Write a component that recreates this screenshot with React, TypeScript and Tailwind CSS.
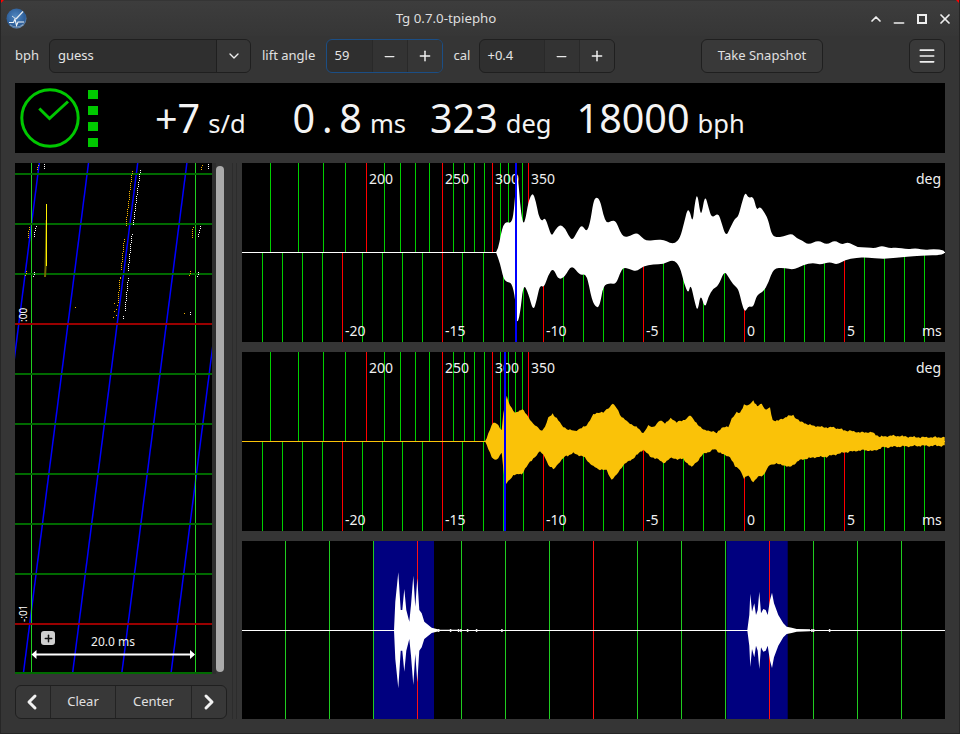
import { Menu, Minus, Plus, ChevronDown, ChevronLeft, ChevronRight, ChevronUp, X } from "lucide-react";

type Pt = [number, number];

const FONT = "font-['Noto_Sans',sans-serif]";

// outlines read off the 3x crops: [x in crop, y in crop]
const WAVE_1_TOP: Pt[] = [
  [768, 277], [775, 265], [782, 225], [790, 195], [800, 185], [812, 190], [820, 170], [826, 100], [830, 50], [835, 60], [840, 130],
  [848, 190], [855, 185], [865, 125], [878, 95], [888, 125], [895, 165], [905, 185], [915, 172], [925, 200], [935, 230], [945, 210],
  [960, 193], [975, 205], [985, 225], [997, 242], [1010, 218], [1025, 193], [1040, 217], [1050, 190], [1060, 125], [1068, 110], [1080, 120],
];
const WAVE_1_TOP_R: Pt[] = [
  [10, 165], [20, 190], [35, 182], [48, 183], [60, 215], [72, 232], [90, 228], [110, 217], [125, 232], [140, 243], [165, 240], [190, 238],
  [210, 250], [225, 250], [240, 235], [252, 190], [262, 148], [270, 155], [278, 190], [285, 125], [292, 100], [300, 155], [305, 162],
  [315, 105], [325, 140], [335, 175], [355, 158], [365, 190], [378, 230], [390, 205], [405, 175], [415, 170], [425, 130], [436, 95],
  [445, 115], [460, 108], [470, 152], [480, 138], [495, 160], [505, 180], [515, 225], [530, 232], [550, 230], [575, 220], [590, 235],
  [605, 240], [625, 255], [655, 240], [680, 255], [705, 240], [725, 255], [745, 245], [770, 262], [800, 262], [825, 265], [845, 257],
  [870, 265], [890, 262], [920, 268], [950, 265], [975, 270], [1000, 267], [1034, 270],
];
const WAVE_1_BOTTOM: Pt[] = [
  [768, 277], [780, 310], [790, 355], [800, 367], [815, 368], [826, 415], [830, 495], [840, 465], [850, 370], [865, 400], [880, 455],
  [890, 420], [900, 375], [912, 383], [925, 345], [940, 323], [955, 360], [975, 350], [995, 313], [1020, 347], [1040, 340], [1055, 420],
  [1070, 445], [1080, 435],
];
const WAVE_1_BOTTOM_R: Pt[] = [
  [10, 375], [30, 370], [48, 373], [60, 340], [70, 322], [90, 328], [110, 335], [130, 318], [160, 313], [190, 313], [220, 298], [240, 320],
  [252, 370], [265, 403], [272, 370], [285, 430], [293, 455], [302, 400], [315, 447], [325, 410], [340, 385], [355, 378], [373, 333],
  [385, 350], [400, 375], [415, 385], [425, 430], [435, 458], [445, 437], [460, 443], [470, 405], [490, 395], [505, 370], [520, 325],
  [553, 323], [580, 330], [610, 315], [640, 308], [660, 315], [690, 305], [710, 315], [735, 300], [770, 293], [800, 292], [850, 297],
  [890, 293], [920, 290], [960, 287], [1034, 285],
];

const WAVE_2_TOP: Pt[] = [
  [735, 274], [745, 250], [755, 225], [765, 218], [775, 225], [785, 240], [790, 190], [800, 140], [810, 165], [825, 190], [835, 185],
  [847, 176], [860, 195], [875, 215], [890, 230], [903, 243], [915, 230], [925, 205], [938, 190], [950, 205], [965, 225], [985, 240],
  [1005, 242], [1025, 235], [1040, 225], [1050, 210], [1060, 195], [1080, 185],
];
const WAVE_2_TOP_R: Pt[] = [
  [10, 188], [20, 180], [38, 160], [50, 175], [65, 200], [85, 218], [105, 228], [130, 249], [145, 228], [160, 230], [180, 212], [195, 218],
  [212, 206], [230, 215], [250, 213], [270, 195], [285, 215], [310, 240], [330, 242], [350, 250], [365, 232], [385, 232], [395, 205],
  [410, 188], [420, 190], [432, 163], [445, 168], [460, 151], [472, 170], [485, 160], [495, 178], [510, 175], [518, 210], [535, 212],
  [560, 200], [580, 196], [600, 215], [630, 225], [670, 232], [700, 232], [730, 240], [780, 247], [815, 247], [840, 260], [880, 257],
  [920, 260], [970, 262], [1034, 262],
];
const WAVE_2_BOTTOM: Pt[] = [
  [735, 274], [745, 295], [755, 320], [765, 332], [775, 325], [785, 305], [795, 405], [805, 395], [820, 375], [845, 372], [860, 350],
  [880, 325], [900, 305], [915, 320], [925, 345], [940, 359], [955, 340], [975, 320], [1000, 310], [1030, 320], [1060, 350], [1080, 358],
];
const WAVE_2_BOTTOM_R: Pt[] = [
  [20, 362], [35, 389], [50, 375], [70, 345], [100, 325], [130, 298], [150, 320], [170, 325], [190, 340], [210, 325], [250, 328], [275, 352],
  [295, 330], [310, 312], [345, 298], [370, 315], [390, 320], [405, 350], [420, 358], [432, 387], [445, 375], [460, 397], [475, 380],
  [490, 375], [510, 345], [525, 340], [550, 345], [570, 352], [600, 330], [640, 322], [680, 320], [730, 308], [790, 300], [820, 303],
  [850, 292], [900, 290], [970, 287], [1034, 287],
];

const BEAT_A: Pt[] = [
  [462, 286], [466, 200], [475, 112], [482, 225], [487, 225], [493, 162], [499, 225], [508, 260], [513, 210], [520, 122], [526, 215],
  [532, 130], [538, 225], [545, 235], [553, 260], [565, 270], [575, 278], [590, 282], [600, 284], [655, 284],
];
const BEAT_B: Pt[] = [
  [442, 286], [448, 240], [451, 176], [456, 230], [463, 205], [468, 240], [473, 225], [478, 170], [483, 235], [490, 222], [497, 225],
  [503, 240], [510, 195], [516, 173], [522, 205], [535, 240], [550, 265], [560, 275], [575, 278], [590, 282], [630, 283],
];

// absolute x of the grid in the two trace panels
const DEG_GREEN = [270, 298, 323, 345, 384, 400, 415, 429, 453, 464, 474, 484, 500, 508, 515, 522];
const DEG_RED = [366, 442, 492, 528];
const MS_GREEN = [262, 282, 302, 322, 362, 382, 402, 422, 462, 483, 503, 523, 563, 583, 603, 623, 663, 683, 703, 724, 764, 784, 804, 824, 864, 884, 904, 924];
const MS_RED = [342, 442, 543, 643, 744, 844];
const MS_LABELS: Array<[string, number]> = [["-20", 345], ["-15", 445], ["-10", 546], ["-5", 646], ["0", 747], ["5", 847]];
const DEG_LABELS: Array<[string, number]> = [["200", 369], ["250", 445], ["300", 495], ["350", 531]];

function dotRun(x1: number, y1: number, x2: number, y2: number): Pt[] {
  const count = Math.round((y2 - y1) / 2);
  return Array.from({ length: count + 1 }, (_v, i) => {
    const t = count === 0 ? 0 : i / count;
    return [Math.floor(x1 + (x2 - x1) * t), Math.floor(y1 + (y2 - y1) * t)] as Pt;
  });
}

const STRIP_WHITE: Pt[] = [
  ...dotRun(140.3, 170, 133.3, 224),
  ...dotRun(132, 234, 128.3, 270),
  ...dotRun(128.3, 278, 125, 310),
  ...dotRun(36, 226, 34, 236),
  ...dotRun(200.7, 226, 198.3, 236),
  [123, 316], [123, 318], [44, 164], [44, 166], [44, 168], [208, 164], [208, 166], [208, 168],
  [34, 272], [34, 274], [33, 276], [198, 272], [198, 274], [197, 276], [190, 312], [190, 314],
];
const STRIP_ORANGE: Pt[] = [
  ...dotRun(132.3, 171, 126, 225),
  ...dotRun(124.3, 239, 121.3, 269),
  ...dotRun(120.3, 277, 118, 302),
  ...dotRun(29.3, 227, 28.3, 237),
  ...dotRun(193, 227, 192.3, 237),
  [114, 303], [117, 305], [116, 309], [114, 311], [116, 315], [113, 317], [75, 307], [184, 313],
  [38, 165], [37, 167], [37, 169], [202, 165], [201, 167], [201, 169],
  [26, 271], [26, 273], [25, 275], [190, 271], [190, 273], [189, 275],
];

function toPoints(points: Pt[], x0: number, y0: number) {
  return points.map(([x, y]) => `${(x0 + x / 3).toFixed(1)},${(y0 + y / 3).toFixed(1)}`).join(" ");
}

function mirror(points: Pt[], center: number): Pt[] {
  return points.slice().reverse().map(([x, y]) => [x, 2 * center - y] as Pt);
}

// rounds the corners of the outline, the first trace has no sharp joints
function smoothPath(points: Pt[]) {
  const mid = (a: Pt, b: Pt) => `${((a[0] + b[0]) / 2).toFixed(1)} ${((a[1] + b[1]) / 2).toFixed(1)}`;
  let d = `M ${points[0][0].toFixed(1)} ${points[0][1].toFixed(1)}`;
  for (let i = 1; i < points.length - 1; i++) {
    d += ` Q ${points[i][0].toFixed(1)} ${points[i][1].toFixed(1)} ${mid(points[i], points[i + 1])}`;
  }
  const last = points[points.length - 1];
  return `${d} L ${last[0].toFixed(1)} ${last[1].toFixed(1)} Z`;
}

// the second trace has a rough edge: walk the outline and wobble it a little
function roughPath(points: Pt[]) {
  const out: Pt[] = [];
  for (let i = 0; i < points.length - 1; i++) {
    const [ax, ay] = points[i];
    const [bx, by] = points[i + 1];
    const steps = Math.max(1, Math.round(Math.abs(bx - ax) / 1.5));
    for (let s = 0; s < steps; s++) {
      const t = s / steps;
      const wobble = Math.round(Math.sin(out.length * 2.3) + Math.sin(out.length * 0.9));
      out.push([ax + (bx - ax) * t, ay + (by - ay) * t + wobble * 0.5]);
    }
  }
  out.push(points[points.length - 1]);
  return `M ${out.map(([x, y]) => `${x.toFixed(1)} ${y.toFixed(1)}`).join(" L ")} Z`;
}

function TraceShape({ cropY, fill, rough, top, topR, bottom, bottomR }: {
  cropY: number; fill: string; rough?: boolean; top: Pt[]; topR: Pt[]; bottom: Pt[]; bottomR: Pt[];
}) {
  // crops start at x=240 and x=600, panels at x=242
  const shift = (pts: Pt[], cropX: number) => pts.map(([x, y]) => [cropX - 242 + x / 3, cropY + y / 3] as Pt);
  const outline = [
    ...shift(top, 240),
    ...shift(topR, 600),
    ...shift(bottomR.slice().reverse(), 600),
    ...shift(bottom.slice().reverse(), 240),
  ];
  return <path d={rough ? roughPath(outline) : smoothPath(outline)} fill={fill} />;
}

function TracePanel({ centerY, blueX, wave, color }: { centerY: number; blueX: number; wave: React.ReactNode; color: string }) {
  const h = 179;
  return (
    <div className="h-[179px] w-[703px] bg-black">
      <svg width={703} height={h} viewBox={`0 0 703 ${h}`} className="block">
        {DEG_GREEN.map((x) => <line key={x} x1={x - 241.5} x2={x - 241.5} y1={0} y2={centerY} stroke="#00cf00" />)}
        {DEG_RED.map((x) => <line key={x} x1={x - 241.5} x2={x - 241.5} y1={0} y2={centerY} stroke="#ff0000" />)}
        {MS_GREEN.map((x) => <line key={x} x1={x - 241.5} x2={x - 241.5} y1={centerY} y2={h} stroke="#00cf00" />)}
        {MS_RED.map((x) => <line key={x} x1={x - 241.5} x2={x - 241.5} y1={centerY} y2={h} stroke="#ff0000" />)}
        <g fill="#f0f0f0" fontFamily="'Noto Sans',sans-serif" fontSize="14">
          {DEG_LABELS.map(([t, x]) => <text key={t} x={x - 242} y={21}>{t}</text>)}
          <text x={674} y={21}>deg</text>
          {MS_LABELS.map(([t, x]) => <text key={t} x={x - 242} y={h - 6}>{t}</text>)}
          <text x={680} y={h - 6}>ms</text>
        </g>
        <line x1={0} x2={703} y1={centerY} y2={centerY} stroke={color} strokeWidth="1" />
        {wave}
        <line x1={blueX} x2={blueX} y1={0} y2={h} stroke="#0000ff" strokeWidth="2" />
      </svg>
    </div>
  );
}

function PaperStrip() {
  const yGreen = [174, 224, 274, 374, 424, 474, 524, 574, 673];
  const bluesAt = [39.3, 88.5, 137.7, 186.9, 236.1];
  return (
    <div className="relative h-[511px] w-[197px] bg-black">
      <svg width={197} height={511} viewBox="15 163 197 511" className="block">
        {bluesAt.map((x) => (
          <line key={x} x1={x} y1={163} x2={x - 65.2} y2={674} stroke="#0000ff" strokeWidth="1.5" />
        ))}
        <line x1={31.5} x2={31.5} y1={163} y2={674} stroke="#20d020" />
        <line x1={195.5} x2={195.5} y1={163} y2={674} stroke="#20d020" />
        {yGreen.map((y) => <line key={y} x1={15} x2={212} y1={y} y2={y} stroke="#006a00" strokeWidth="2" />)}
        <line x1={15} x2={212} y1={324} y2={324} stroke="#9a0000" strokeWidth="2" />
        <line x1={15} x2={212} y1={624} y2={624} stroke="#9a0000" strokeWidth="2" />
        <polygon points="45.6,220 46.6,220 46.6,267 46,277 44,277 44.6,267" fill="#6f6a00" />
        <line x1={46.5} x2={46.5} y1={204} y2={266} stroke="#ffee00" strokeWidth="1" />
        {STRIP_ORANGE.map(([x, y], i) => <rect key={i} x={x} y={y} width={1} height={1} fill="#f5b400" />)}
        {STRIP_WHITE.map(([x, y], i) => <rect key={i} x={x} y={y} width={1} height={1} fill="#ffffff" />)}
        <g fill="#ffffff" fontFamily="'Noto Sans',sans-serif" fontSize="10">
          <text transform="translate(27 322) rotate(-90)">:00</text>
          <text transform="translate(27 622) rotate(-90)">-:01</text>
        </g>
        <text x={113} y={646} textAnchor="middle" fill="#f0f0f0" fontFamily="'Noto Sans',sans-serif" fontSize="12">20.0 ms</text>
        <line x1={33} x2={194} y1={654.5} y2={654.5} stroke="#ffffff" strokeWidth="2" />
        <polygon points="31.5,654.5 36.5,650 36.5,659" fill="#ffffff" />
        <polygon points="195,654.5 190,650 190,659" fill="#ffffff" />
      </svg>
      <div className="absolute left-[26px] top-[468px] flex h-[14px] w-[14px] items-center justify-center rounded-[3px] bg-[#cfcfcf]">
        <Plus size={11} strokeWidth={3.2} color="#111111" />
      </div>
    </div>
  );
}

function BeatPanel() {
  const reds = [417, 593, 769];
  const greens = [285, 329, 373, 461, 505, 549, 637, 681, 725, 813, 857, 901];
  const ticksA = [595, 631, 655, 662, 682, 709, 785];
  const ticksB = [635, 640, 688];
  const toPoly = (pts: Pt[], x0: number) => {
    const all = [...pts, ...mirror(pts, 286)];
    return toPoints(all, x0 - 242, 535 - 541);
  };
  return (
    <div className="h-[178px] w-[703px] bg-black">
      <svg width={703} height={178} viewBox="0 0 703 178" className="block">
        <rect x={131.5} y={0} width={60.5} height={178} fill="#00007f" />
        <rect x={484.7} y={0} width={61} height={178} fill="#00007f" />
        {greens.map((x) => <line key={x} x1={x - 241.5} x2={x - 241.5} y1={0} y2={178} stroke="#20cc20" />)}
        {reds.map((x) => <line key={x} x1={x - 241.5} x2={x - 241.5} y1={0} y2={178} stroke="#ff1010" />)}
        <line x1={0} x2={703} y1={89.5} y2={89.5} stroke="#ffffff" />
        <polygon points={toPoly(BEAT_A, 240)} fill="#ffffff" />
        <polygon points={toPoly(BEAT_B, 600)} fill="#ffffff" />
        {ticksA.map((x) => <rect key={x} x={240 + x / 3 - 242.5} y={88} width={1.5} height={3} fill="#eeeeee" />)}
        {ticksB.map((x) => <rect key={x} x={600 + x / 3 - 242.5} y={88} width={1.5} height={3} fill="#eeeeee" />)}
      </svg>
    </div>
  );
}

function SpinButton({ value, focused, width }: { value: string; focused?: boolean; width: string }) {
  return (
    <div className={`flex h-[34px] ${width} overflow-hidden rounded-[6px] border bg-[#2f2f2f] ${focused ? "border-[#1b4e85]" : "border-[#1f1f1f]"}`}>
      <span className="flex flex-1 items-center pl-2 text-[#e4e4e4]">{value}</span>
      <span className="flex w-[35px] items-center justify-center border-l border-[#292929] bg-[#333333]">
        <Minus size={15} strokeWidth={2} color="#e8e8e8" />
      </span>
      <span className="flex w-[35px] items-center justify-center border-l border-[#292929] bg-[#363636]">
        <Plus size={16} strokeWidth={2.2} color="#f2f2f2" />
      </span>
    </div>
  );
}

function AppLogo() {
  return (
    <svg width={21} height={21} viewBox="0 0 21 21" className="block">
      <defs>
        <radialGradient id="globe" cx="0.45" cy="0.4" r="0.7">
          <stop offset="0" stopColor="#4f86c0" />
          <stop offset="0.7" stopColor="#2c5c96" />
          <stop offset="1" stopColor="#a7b8c8" />
        </radialGradient>
      </defs>
      <circle cx={10.5} cy={10.5} r={10} fill="url(#globe)" />
      <path d="M3 14.5 H7.5 L9 11 L10.5 17.5 L12 14 H18" fill="none" stroke="#f2f6fa" strokeWidth="1.1" />
      <path d="M10 11 L17 3.5" stroke="#e8eef4" strokeWidth="1.2" />
      <path d="M6 8 L10 11" stroke="#d4dee8" strokeWidth="1" />
      <path d="M4 16 Q10.5 21 17 16 L17 17.5 Q10.5 21 4 17.5 Z" fill="#c4d0da" opacity="0.5" />
    </svg>
  );
}

function StatusValue({ value, unit, className }: { value: string; unit: string; className: string }) {
  return (
    <div className={`flex items-baseline ${className}`}>
      <span className="text-[39.5px] leading-none whitespace-pre [word-spacing:-3.5px]">{value}</span>
      <span className="ml-[8px] text-[25.5px] leading-none">{unit}</span>
    </div>
  );
}

export default function App() {
  return (
    <div className={`relative flex h-[734px] w-[960px] flex-col overflow-hidden bg-[#353535] pt-px ${FONT}`}>
      {/* title bar */}
      <div className="relative flex h-[35px] items-center bg-gradient-to-b from-[#3d3d3d] to-[#363636] pl-[6px] pr-[7px]">
        <AppLogo />
        <span className="absolute left-0 w-[892px] text-center text-[13.3px] text-[#dedede]">Tg 0.7.0-tpiepho</span>
        <div className="ml-auto flex items-center gap-[7px] text-[#eeeeee]">
          <ChevronUp size={16} strokeWidth={2.6} />
          <Minus size={16} strokeWidth={2.4} className="translate-y-[4px]" />
          <span className="mx-[3px] h-[10px] w-[10px] border-2 border-[#eeeeee]" />
          <X size={16} strokeWidth={2.6} />
        </div>
      </div>

      {/* toolbar */}
      <div className="mt-[3px] flex h-[34px] items-center px-[15px] text-[13px] text-[#e0e0e0]">
        <span className="w-[34px]">bph</span>
        <div className="flex h-[34px] w-[202px] overflow-hidden rounded-[6px] border border-[#1f1f1f] bg-[#2f2f2f]">
          <span className="flex flex-1 items-center pl-2 text-[#e4e4e4]">guess</span>
          <span className="flex w-[34px] items-center justify-center border-l border-[#1f1f1f] bg-[#363636]">
            <ChevronDown size={16} strokeWidth={2} color="#eeeeee" />
          </span>
        </div>
        <span className="ml-[11px] w-[63.5px]">lift angle</span>
        <SpinButton value="59" focused width="w-[117px]" />
        <span className="ml-[11px] w-[25px]">cal</span>
        <SpinButton value="+0.4" width="w-[136px]" />
        <button className="ml-[86.5px] flex h-[34px] w-[122px] items-center justify-center rounded-[6px] border border-[#1f1f1f] bg-[#393939] text-[#e0e0e0]">
          Take Snapshot
        </button>
        <button className="ml-auto flex h-[34px] w-[36px] items-center justify-center rounded-[6px] border border-[#1f1f1f] bg-[#393939]">
          <Menu size={20} strokeWidth={2} color="#f0f0f0" />
        </button>
      </div>

      {/* status panel */}
      <div className="mx-[15px] mt-[10px] flex h-[70px] items-center bg-black text-[#f4f4f4]">
        <svg width={60} height={60} viewBox="0 0 60 60" className="ml-[5px] block shrink-0">
          <circle cx={30} cy={30} r={28.2} fill="none" stroke="#00c800" strokeWidth="3" />
          <path d="M19.3 20.5 L29.5 30.5 L48 13.5" fill="none" stroke="#00c800" strokeWidth="3" />
        </svg>
        <div className="ml-[8px] flex flex-col gap-[7px]">
          <span className="h-[9px] w-[10px] bg-[#00c800]" />
          <span className="h-[9px] w-[10px] bg-[#00c800]" />
          <span className="h-[9px] w-[10px] bg-[#00c800]" />
          <span className="h-[9px] w-[10px] bg-[#00c800]" />
        </div>
        <StatusValue value="+7" unit="s/d" className="ml-[57px] pt-[2px]" />
        <StatusValue value="0 . 8" unit="ms" className="ml-[47px] pt-[2px]" />
        <StatusValue value="323" unit="deg" className="ml-[24px] pt-[2px]" />
        <StatusValue value="18000" unit="bph" className="ml-[25px] pt-[2px]" />
      </div>

      {/* main */}
      <div className="mt-[10px] flex pl-[15px]">
        <div className="flex w-[212px] flex-col">
          <div className="flex h-[511px]">
            <PaperStrip />
            <div className="h-[511px] w-[4px] bg-[#2e2e2e]" />
            <div className="mt-[3px] h-[506px] w-[8px] rounded-full bg-[#ababab]" />
          </div>
          <div className="mt-[11px] flex h-[34px] overflow-hidden rounded-[6px] border border-[#1f1f1f] bg-[#383838] text-[13px] text-[#e0e0e0]">
            <span className="flex w-[34px] items-center justify-center pr-[2px]">
              <ChevronLeft size={24} strokeWidth={3} color="#f2f2f2" />
            </span>
            <span className="flex w-[65px] items-center justify-center border-l border-[#232323]">Clear</span>
            <span className="flex w-[76px] items-center justify-center border-l border-[#232323]">Center</span>
            <span className="flex flex-1 items-center justify-center border-l border-[#232323]">
              <ChevronRight size={24} strokeWidth={3} color="#f2f2f2" />
            </span>
          </div>
        </div>
        <div className="ml-[5px] w-px self-stretch bg-[#2c2c2c]" />
        <div className="ml-[3px] w-px self-stretch bg-[#2c2c2c]" />
        <div className="ml-[5px] flex flex-col gap-[10px]">
          <TracePanel
            centerY={89.5}
            blueX={274}
            color="#ffffff"
            wave={<TraceShape cropY={160 - 163} fill="#ffffff" top={WAVE_1_TOP} topR={WAVE_1_TOP_R} bottom={WAVE_1_BOTTOM} bottomR={WAVE_1_BOTTOM_R} />}
          />
          <TracePanel
            centerY={89.5}
            blueX={263}
            color="#fac208"
            wave={<TraceShape cropY={350 - 352} fill="#fac208" rough top={WAVE_2_TOP} topR={WAVE_2_TOP_R} bottom={WAVE_2_BOTTOM} bottomR={WAVE_2_BOTTOM_R} />}
          />
          <BeatPanel />
        </div>
      </div>

      {/* desktop showing through the window's rounded corners */}
      <span className="absolute left-0 top-0 h-[4px] w-[4px] bg-[#ff0000] [clip-path:polygon(0_0,100%_0,0_100%)]" />
      <span className="absolute right-0 top-0 h-[4px] w-[4px] bg-[#ff0000] [clip-path:polygon(0_0,100%_0,100%_100%)]" />
      <span className="pointer-events-none absolute inset-0 border-x border-b border-[#262626]" />
    </div>
  );
}
